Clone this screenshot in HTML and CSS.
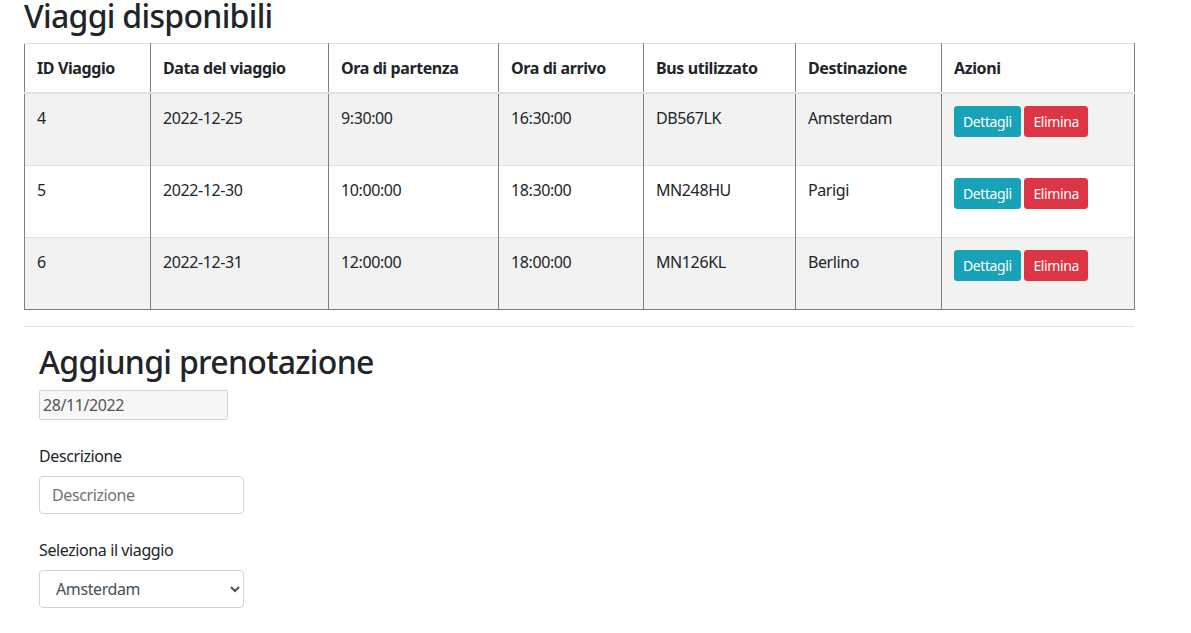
FILE: index.html
```html
<!DOCTYPE html>
<html lang="it">
<head>
<meta charset="utf-8">
<title>Viaggi disponibili</title>
<link rel="stylesheet" href="styles.css">
</head>
<body>
<main class="page">
  <h2 class="title title-top">Viaggi disponibili</h2>
  <table class="trips">
    <colgroup>
      <col class="c-id"><col class="c-date"><col class="c-dep"><col class="c-arr"><col class="c-bus"><col class="c-dest"><col class="c-act">
    </colgroup>
    <thead>
      <tr>
        <th>ID Viaggio</th><th>Data del viaggio</th><th>Ora di partenza</th><th>Ora di arrivo</th><th>Bus utilizzato</th><th>Destinazione</th><th>Azioni</th>
      </tr>
    </thead>
    <tbody>
      <tr class="odd">
        <td>4</td><td>2022-12-25</td><td>9:30:00</td><td>16:30:00</td><td>DB567LK</td><td>Amsterdam</td>
        <td><div class="actions"><button class="btn btn-info">Dettagli</button> <button class="btn btn-danger">Elimina</button></div></td>
      </tr>
      <tr>
        <td>5</td><td>2022-12-30</td><td>10:00:00</td><td>18:30:00</td><td>MN248HU</td><td>Parigi</td>
        <td><div class="actions"><button class="btn btn-info">Dettagli</button> <button class="btn btn-danger">Elimina</button></div></td>
      </tr>
      <tr class="odd">
        <td>6</td><td>2022-12-31</td><td>12:00:00</td><td>18:00:00</td><td>MN126KL</td><td>Berlino</td>
        <td><div class="actions"><button class="btn btn-info">Dettagli</button> <button class="btn btn-danger">Elimina</button></div></td>
      </tr>
    </tbody>
  </table>
  <hr class="sep">
  <section class="booking">
    <h2 class="title">Aggiungi prenotazione</h2>
    <input class="date-input" type="text" value="28/11/2022" readonly>
    <div class="group">
      <label class="label" for="desc">Descrizione</label>
      <input id="desc" class="form-control" type="text" placeholder="Descrizione">
    </div>
    <div class="group">
      <label class="label" for="trip">Seleziona il viaggio</label>
      <select id="trip" class="form-control select">
        <option>Amsterdam</option>
        <option>Parigi</option>
        <option>Berlino</option>
      </select>
    </div>
  </section>
</main>
</body>
</html>
```
FILE: styles.css
```css
* { box-sizing: border-box; }

html, body {
  margin: 0;
  padding: 0;
  background: #fff;
}

body {
  font-family: "Segoe UI", "Noto Sans", "Open Sans", sans-serif;
  font-size: 16px;
  line-height: 1.5;
  color: #212529;
  letter-spacing: -0.4px;
}

.page {
  padding-left: 24px;
  width: 1134px;
}

.title {
  font-size: 32px;
  font-weight: 500;
  line-height: 1.2;
  letter-spacing: -0.7px;
  margin: 0 0 8px;
}

.title-top {
  line-height: 32px;
  margin-bottom: 11.4px;
}

.trips {
  width: 1110px;
  table-layout: fixed;
  border-collapse: collapse;
  border-bottom: 1px solid #808080;
}

.c-id { width: 126px; }
.c-date { width: 178px; }
.c-dep { width: 170px; }
.c-arr { width: 145px; }
.c-bus { width: 152px; }
.c-dest { width: 146px; }
.c-act { width: 193px; }

.trips th,
.trips td {
  padding: 12px;
  text-align: left;
  vertical-align: top;
  border-top: 1px solid #dee2e6;
  border-left: 1px solid #808080;
  border-right: 1px solid #808080;
}

.trips th {
  font-weight: 700;
  border-bottom: 2px solid #dee2e6;
}

.trips tbody tr.odd {
  background: #f2f2f2;
}

.actions {
  margin-bottom: 16px;
  white-space: nowrap;
}

.btn {
  display: inline-block;
  font-family: inherit;
  font-size: 14px;
  line-height: 1.5;
  letter-spacing: -0.4px;
  padding: 4px 8px;
  border: 1px solid transparent;
  border-radius: 3px;
  color: #fff;
  cursor: pointer;
  vertical-align: middle;
}

.btn-info {
  background: #17a2b8;
  border-color: #17a2b8;
}

.btn-danger {
  background: #dc3545;
  border-color: #dc3545;
}

.sep {
  margin: 16px 0;
  border: 0;
  border-top: 1px solid rgba(0, 0, 0, 0.1);
  width: 1110px;
}

.booking {
  padding-left: 15px;
}

.date-input {
  display: block;
  width: 189px;
  height: 30px;
  padding: 1px 3px;
  font-family: inherit;
  font-size: 16px;
  letter-spacing: -0.4px;
  color: #545454;
  background: #f7f7f7;
  border: 1px solid #d3d3d3;
  border-radius: 2px;
  margin: 0;
}

.group {
  margin-top: 24px;
}

.label {
  display: block;
  margin-bottom: 8px;
}

.form-control {
  display: block;
  width: 205px;
  height: 38px;
  padding: 6px 12px;
  font-family: inherit;
  font-size: 16px;
  line-height: 1.5;
  letter-spacing: -0.4px;
  color: #495057;
  background: #fff;
  border: 1px solid #ced4da;
  border-radius: 4px;
}

.form-control::placeholder {
  color: #6c757d;
}
```
